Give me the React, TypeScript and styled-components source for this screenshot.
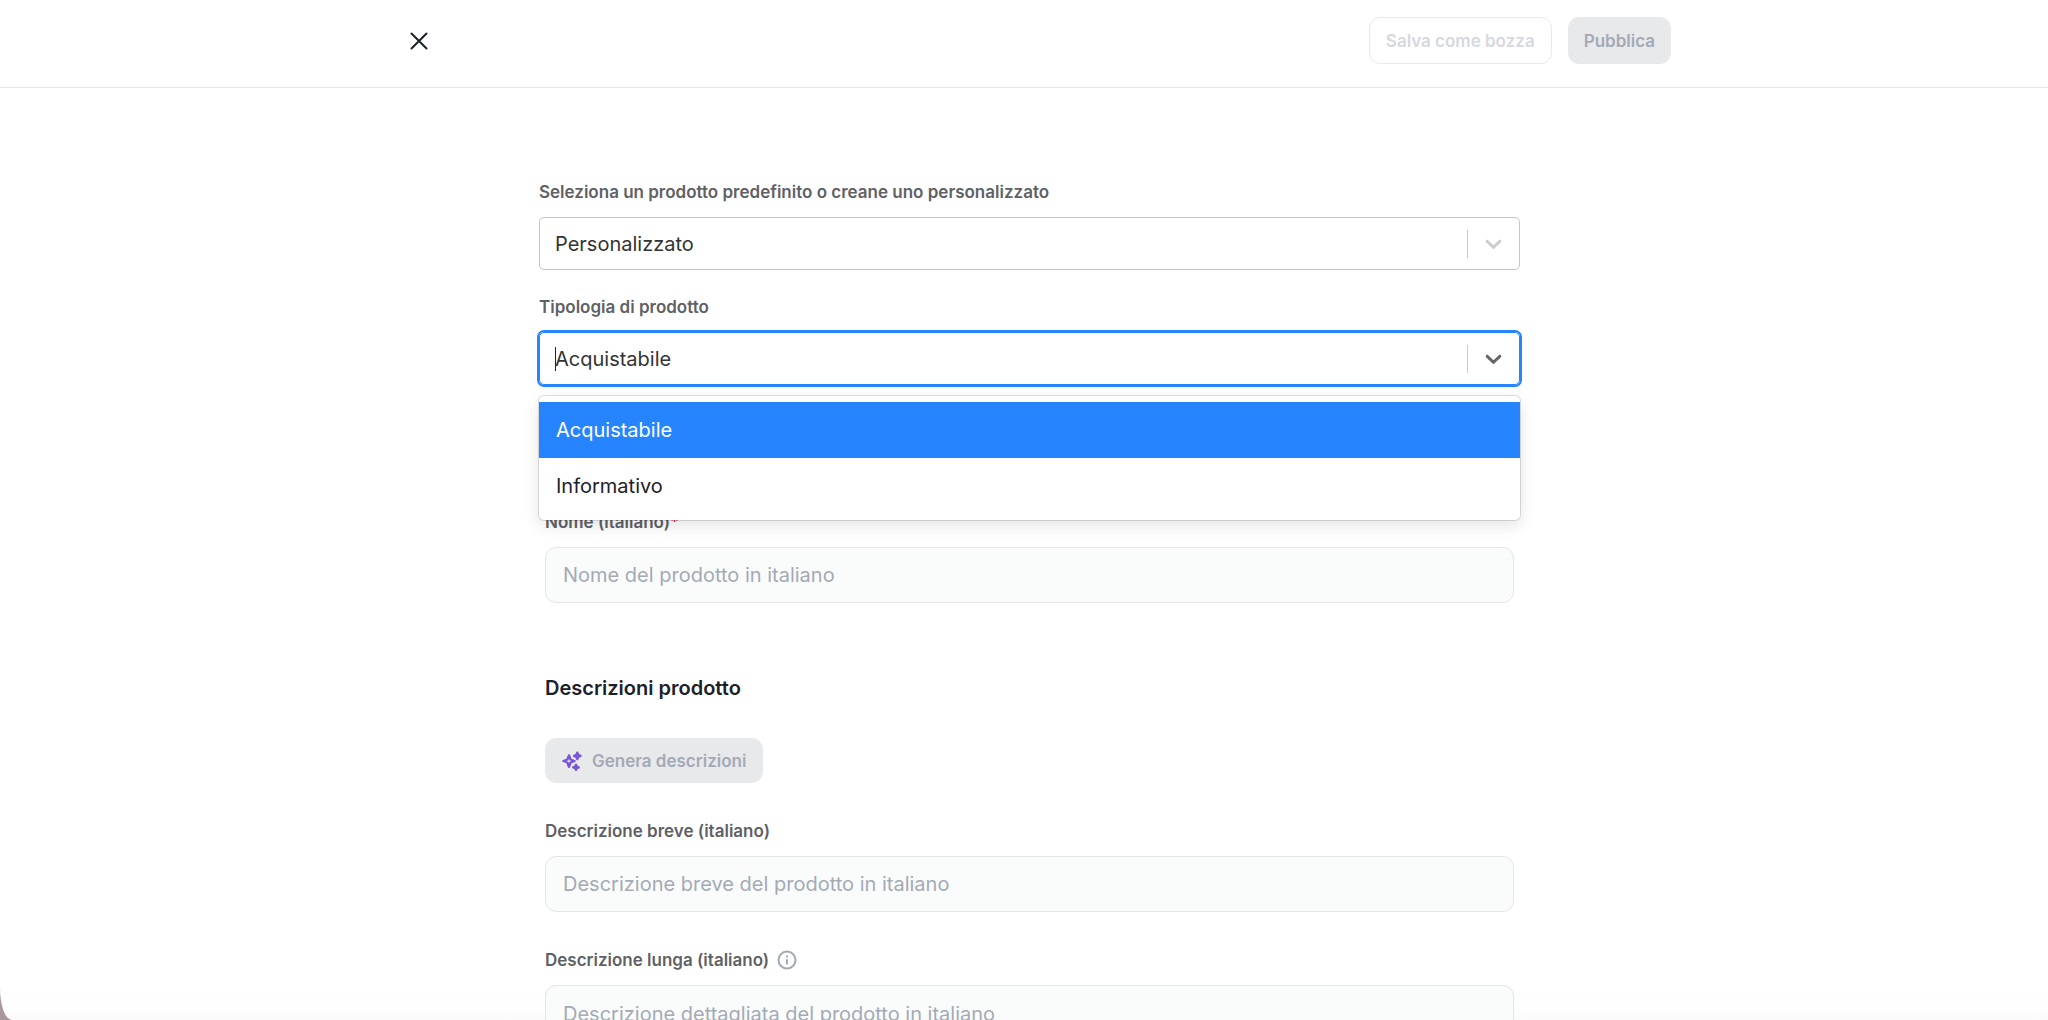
import React, { useId, useState } from "react";
import styled, { createGlobalStyle, css } from "styled-components";

const GlobalStyle = createGlobalStyle`
  *, *::before, *::after { box-sizing: border-box; }
  html { height: 100%; background: #a8979d; }
  body {
    margin: 0;
    height: 100%;
    overflow: hidden;
    font-family: Inter, "Liberation Sans", sans-serif;
    -webkit-font-smoothing: antialiased;
  }
  #root { height: 100%; }
  button, input, select, textarea { font-family: inherit; margin: 0; }
`;

const Page = styled.div`
  height: 100%;
  overflow: hidden;
  background: linear-gradient(to top, #fbfbfb, #ffffff 24px);
  border-bottom-left-radius: 12px 32px;
`;

const Header = styled.header`
  height: 88px;
  padding: 0 0 6px 10px;
  border-bottom: 1px solid #e7e8ea;
  display: flex;
  justify-content: center;
`;

const HeaderContent = styled.div`
  width: 100%;
  max-width: 1284px;
  display: flex;
  align-items: center;
  justify-content: space-between;
`;

const Actions = styled.div`
  display: flex;
  gap: 16px;
`;

const CloseButton = styled.button`
  display: flex;
  padding: 20px;
  border: 0;
  background: transparent;
  color: #1d2129;
`;

const Button = styled.button<{ $variant: "outline" | "filled"; $compact?: boolean }>`
  display: inline-flex;
  align-items: center;
  gap: 10px;
  height: ${(p) => (p.$compact ? 45 : 47)}px;
  padding: 0 ${(p) => (p.$compact ? 16 : 15)}px;
  border-radius: 11px;
  border: 1px solid #e8e9eb;
  font-size: 17px;
  line-height: 24px;
  font-weight: 600;
  white-space: nowrap;
  ${(p) =>
    p.$variant === "outline"
      ? css`
          padding: 0 16px;
          background: #ffffff;
          color: #d6d8e0;
        `
      : css`
          background: #e8e9eb;
          color: #a3aab6;
        `}
`;

const Form = styled.form`
  max-width: 992px;
  margin: 0 auto;
  padding: 92px 0 0 11px;
  display: flex;
  flex-direction: column;
`;

const Field = styled.div`
  display: flex;
  flex-direction: column;
  gap: 13px;
  margin-bottom: 25px;
`;

const LabelRow = styled.div`
  display: flex;
  align-items: center;
  gap: 8px;
  height: 24px;
`;

const Label = styled.label`
  font-size: 17px;
  line-height: 24px;
  font-weight: 600;
  color: #5f6165;
`;

const Required = styled.span`
  color: #f0284a;
`;

const SelectBox = styled.div<{ $open?: boolean }>`
  position: relative;
  display: grid;
  grid-template-columns: 1fr 52px;
  align-items: center;
  height: 53px;
  border: 1px solid ${(p) => (p.$open ? "#2684ff" : "#c4c4c4")};
  border-radius: 5px;
  box-shadow: ${(p) => (p.$open ? "0 0 0 2px #2684ff" : "none")};
  color: ${(p) => (p.$open ? "#666666" : "#cccccc")};
`;

const Select = styled.select`
  grid-area: 1 / 1 / 2 / 3;
  width: 100%;
  height: 100%;
  padding: 0 64px 0 15px;
  appearance: none;
  border: 0;
  outline: 0;
  background: transparent;
  font-size: 20px;
  color: #333333;
`;

const Indicator = styled.span`
  grid-area: 1 / 2 / 2 / 3;
  height: 28px;
  display: flex;
  align-items: center;
  justify-content: center;
  border-left: 1px solid #cccccc;
  pointer-events: none;
`;

const Caret = styled.span`
  position: absolute;
  left: 15px;
  top: 14px;
  width: 1px;
  height: 24px;
  background: #222222;
`;

const Menu = styled.div`
  position: absolute;
  z-index: 1;
  top: calc(100% + 12px);
  left: -1px;
  right: -1px;
  padding: 6px 0;
  background: #ffffff;
  border-radius: 5px;
  box-shadow: 0 0 0 1px rgba(0, 0, 0, 0.12), 0 5px 16px rgba(0, 0, 0, 0.12);
`;

const Option = styled.button<{ $selected: boolean }>`
  display: block;
  width: 100%;
  height: 56px;
  padding: 0 17px;
  border: 0;
  text-align: left;
  font-size: 20px;
  background: ${(p) => (p.$selected ? "#2684ff" : "transparent")};
  color: ${(p) => (p.$selected ? "#ffffff" : "#1d2129")};
`;

const Section = styled.section`
  padding: 0 6px;

  ${Field} {
    margin-bottom: 36px;
  }
`;

const NameSection = styled(Section)`
  padding-top: 100px;
`;

const textControl = css`
  width: 100%;
  padding: 0 17px;
  border: 1px solid #e3e5e9;
  border-radius: 11px;
  background: #fafcfb;
  font-size: 20px;
  color: #1d2129;
  outline: 0;
  &::placeholder {
    color: #a3aab6;
    opacity: 1;
  }
`;

const TextInput = styled.input`
  ${textControl}
  height: 56px;
`;

const TextArea = styled.textarea`
  ${textControl}
  display: block;
  height: 140px;
  padding-top: 16px;
  line-height: 24px;
  resize: none;
`;

const SectionTitle = styled.h2`
  margin: 0 0 36px;
  padding-top: 35px;
  font-size: 20px;
  line-height: 28px;
  font-weight: 600;
  color: #1d2129;
`;

const GenerateRow = styled.div`
  display: flex;
  margin-bottom: 36px;
`;

const CloseIcon = () => (
  <svg width="24" height="24" viewBox="0 0 24 24" fill="none" stroke="currentColor" strokeWidth="2" strokeLinecap="round" aria-hidden="true">
    <path d="M4.5 4.5 19.5 19.5M19.5 4.5 4.5 19.5" />
  </svg>
);

const Chevron = () => (
  <svg width="27" height="27" viewBox="0 0 20 20" fill="currentColor" aria-hidden="true">
    <path d="M4.516 7.548c0.436-0.446 1.043-0.481 1.576 0l3.908 3.747 3.908-3.747c0.533-0.481 1.141-0.446 1.574 0 0.436 0.445 0.408 1.197 0 1.615-0.406 0.418-4.695 4.502-4.695 4.502-0.217 0.223-0.502 0.335-0.787 0.335s-0.57-0.112-0.789-0.335c0 0-4.287-4.084-4.695-4.502s-0.436-1.17 0-1.615z" />
  </svg>
);

const Sparkles = () => (
  <svg width="20" height="20" viewBox="0 0 20 20" fill="none" stroke="#7a55d6" strokeWidth="2.4" strokeLinejoin="round" aria-hidden="true">
    <path d="M7 4.4 8.6 8.5 12.5 10 8.6 11.5 7 15.8 5.4 11.5 1.5 10 5.4 8.5Z" />
    <path d="M15.3 1.7 16.3 3.9 18.5 4.9 16.3 5.9 15.3 8.1 14.3 5.9 12.1 4.9 14.3 3.9Z" />
    <path d="M14 13.8 14.8 15.5 16.7 16.3 14.8 17.1 14 18.8 13.2 17.1 11.3 16.3 13.2 15.5Z" />
  </svg>
);

const InfoIcon = () => (
  <svg width="20" height="20" viewBox="0 0 20 20" fill="none" stroke="#a3aab6" strokeWidth="2" aria-hidden="true">
    <circle cx="10" cy="10" r="8.5" />
    <path d="M10 9.3v5M10 5.6v2" />
  </svg>
);

const productTypes = ["Acquistabile", "Informativo"];

function TypeSelect() {
  const id = useId();
  const [value, setValue] = useState(productTypes[0]);
  return (
    <Field>
      <LabelRow>
        <Label htmlFor={id}>Tipologia di prodotto</Label>
      </LabelRow>
      <SelectBox $open>
        <Select id={id} value={value} onChange={(e) => setValue(e.target.value)}>
          {productTypes.map((type) => (
            <option key={type}>{type}</option>
          ))}
        </Select>
        <Caret />
        <Indicator>
          <Chevron />
        </Indicator>
        <Menu role="listbox">
          {productTypes.map((type) => (
            <Option
              key={type}
              type="button"
              role="option"
              aria-selected={type === value}
              $selected={type === value}
              onClick={() => setValue(type)}
            >
              {type}
            </Option>
          ))}
        </Menu>
      </SelectBox>
    </Field>
  );
}

export default function App() {
  return (
    <>
      <GlobalStyle />
      <Page>
        <Header>
          <HeaderContent>
            <CloseButton type="button" aria-label="Chiudi">
              <CloseIcon />
            </CloseButton>
            <Actions>
              <Button type="button" disabled $variant="outline">
                Salva come bozza
              </Button>
              <Button type="button" disabled $variant="filled">
                Pubblica
              </Button>
            </Actions>
          </HeaderContent>
        </Header>
        <Form>
          <Field>
            <LabelRow>
              <Label htmlFor="preset">Seleziona un prodotto predefinito o creane uno personalizzato</Label>
            </LabelRow>
            <SelectBox>
              <Select id="preset">
                <option>Personalizzato</option>
              </Select>
              <Indicator>
                <Chevron />
              </Indicator>
            </SelectBox>
          </Field>
          <TypeSelect />
          <NameSection>
            <Field>
              <LabelRow>
                <Label htmlFor="name">
                  Nome (italiano)<Required>*</Required>
                </Label>
              </LabelRow>
              <TextInput id="name" placeholder="Nome del prodotto in italiano" />
            </Field>
          </NameSection>
          <Section>
            <SectionTitle>Descrizioni prodotto</SectionTitle>
            <GenerateRow>
              <Button type="button" disabled $variant="filled" $compact>
                <Sparkles />
                Genera descrizioni
              </Button>
            </GenerateRow>
            <Field>
              <LabelRow>
                <Label htmlFor="short">Descrizione breve (italiano)</Label>
              </LabelRow>
              <TextInput id="short" placeholder="Descrizione breve del prodotto in italiano" />
            </Field>
            <Field>
              <LabelRow>
                <Label htmlFor="long">Descrizione lunga (italiano)</Label>
                <InfoIcon />
              </LabelRow>
              <TextArea id="long" placeholder="Descrizione dettagliata del prodotto in italiano" />
            </Field>
          </Section>
        </Form>
      </Page>
    </>
  );
}
